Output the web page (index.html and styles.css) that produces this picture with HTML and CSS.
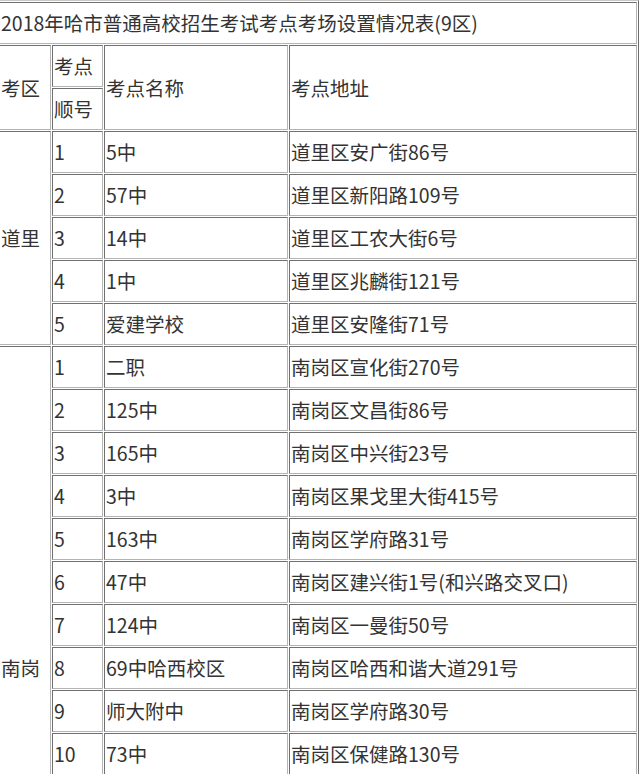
FILE: index.html
```html
<!DOCTYPE html>
<html lang="zh-CN">
<head>
<meta charset="utf-8">
<title>2018年哈市普通高校招生考试考点考场设置情况表(9区)</title>
<link rel="stylesheet" href="styles.css">
</head>
<body>
<table class="sheet">
  <colgroup>
    <col class="c-area">
    <col class="c-no">
    <col class="c-name">
    <col class="c-addr">
  </colgroup>
  <tbody>
    <tr><td colspan="4">2018年哈市普通高校招生考试考点考场设置情况表(9区)</td></tr>
    <tr><td rowspan="2">考区</td><td>考点</td><td rowspan="2">考点名称</td><td rowspan="2">考点地址</td></tr>
    <tr><td>顺号</td></tr>
    <tr><td rowspan="5">道里</td><td>1</td><td>5中</td><td>道里区安广街86号</td></tr>
    <tr><td>2</td><td>57中</td><td>道里区新阳路109号</td></tr>
    <tr><td>3</td><td>14中</td><td>道里区工农大街6号</td></tr>
    <tr><td>4</td><td>1中</td><td>道里区兆麟街121号</td></tr>
    <tr><td>5</td><td>爱建学校</td><td>道里区安隆街71号</td></tr>
    <tr><td rowspan="15">南岗</td><td>1</td><td>二职</td><td>南岗区宣化街270号</td></tr>
    <tr><td>2</td><td>125中</td><td>南岗区文昌街86号</td></tr>
    <tr><td>3</td><td>165中</td><td>南岗区中兴街23号</td></tr>
    <tr><td>4</td><td>3中</td><td>南岗区果戈里大街415号</td></tr>
    <tr><td>5</td><td>163中</td><td>南岗区学府路31号</td></tr>
    <tr><td>6</td><td>47中</td><td>南岗区建兴街1号(和兴路交叉口)</td></tr>
    <tr><td>7</td><td>124中</td><td>南岗区一曼街50号</td></tr>
    <tr><td>8</td><td>69中哈西校区</td><td>南岗区哈西和谐大道291号</td></tr>
    <tr><td>9</td><td>师大附中</td><td>南岗区学府路30号</td></tr>
    <tr><td>10</td><td>73中</td><td>南岗区保健路130号</td></tr>
    <tr><td>11</td><td></td><td></td></tr>
    <tr><td>12</td><td></td><td></td></tr>
    <tr><td>13</td><td></td><td></td></tr>
    <tr><td>14</td><td></td><td></td></tr>
    <tr><td>15</td><td></td><td></td></tr>
  </tbody>
</table>
</body>
</html>
```

FILE: styles.css
```css
html, body {
  margin: 0;
  padding: 0;
  background: #ffffff;
}

body {
  overflow: hidden;
}

.sheet {
  margin: 0 0 0 -3px;
  table-layout: fixed;
  width: 642px;
  border-collapse: separate;
  border-spacing: 1px;
  border: 1px solid;
  border-color: #c8c8c8 #6e6e6e #6e6e6e #c8c8c8;
  font-family: "Noto Sans CJK SC", "Noto Sans", sans-serif;
  font-size: 19.5px;
  color: #333333;
}

.c-area { width: 52px; }
.c-no { width: 51px; }
.c-name { width: 184px; }
.c-addr { width: 348px; }

.sheet td {
  border: 1px solid;
  border-color: #707070 #b4b4b4 #b4b4b4 #707070;
  padding: 0 1px;
  line-height: 40px;
  height: 40px;
  vertical-align: middle;
  text-align: left;
  white-space: nowrap;
  overflow: hidden;
}
```
